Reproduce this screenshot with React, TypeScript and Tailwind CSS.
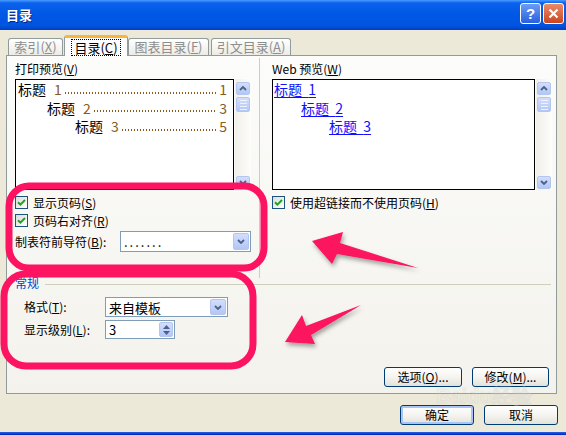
import React from 'react';

const Key = ({ k }: { k: string }) => (
  <>
    (<span className="underline">{k}</span>)
  </>
);

const Check = () => (
  <span className="w-[13px] h-[13px] border border-[#1c5180] bg-gradient-to-br from-[#dcdcd7] to-white flex items-center justify-center shrink-0">
    <svg width="9" height="9" viewBox="0 0 9 9">
      <path d="M1 4.2 L3.4 6.6 L8 2" stroke="#21a121" strokeWidth="2" fill="none" />
    </svg>
  </span>
);

const Chevron = ({ up }: { up?: boolean }) => (
  <svg width="8" height="5" viewBox="0 0 8 5">
    <path d={up ? 'M1 4 L4 1 L7 4' : 'M1 1 L4 4 L7 1'} stroke="#4d6185" strokeWidth="1.8" fill="none" />
  </svg>
);

const BlueBtn = ({ className, children }: { className: string; children?: React.ReactNode }) => (
  <span
    className={`rounded-[2px] border border-[#b4c6ef] bg-gradient-to-b from-[#d2defd] to-[#b3c6f5] flex items-center justify-center ${className}`}
  >
    {children}
  </span>
);

const Select = ({ value, className }: { value: string; className: string }) => (
  <div className={`border border-[#7f9db9] bg-white flex items-center p-[1px] ${className}`}>
    <span className="flex-1 pl-[2px] text-[13px] leading-[15px] whitespace-nowrap">{value}</span>
    <BlueBtn className="w-[16px] h-full">
      <Chevron />
    </BlueBtn>
  </div>
);

const ScrollBar = () => (
  <div className="w-[16px] h-full flex flex-col items-center pt-[3px] pb-[1px] bg-gradient-to-r from-[#f1efe9] to-[#fdfdfa]">
    <BlueBtn className="w-[14px] h-[13px]">
      <Chevron up />
    </BlueBtn>
    <BlueBtn className="w-[14px] h-[15px] mt-[2px] flex-col gap-[2px]">
      <span className="w-[7px] h-px bg-[#eef3fe]" />
      <span className="w-[7px] h-px bg-[#eef3fe]" />
      <span className="w-[7px] h-px bg-[#eef3fe]" />
      <span className="w-[7px] h-px bg-[#eef3fe]" />
    </BlueBtn>
    <div className="flex-1" />
    <BlueBtn className="w-[14px] h-[13px]">
      <Chevron />
    </BlueBtn>
  </div>
);

const XpButton = ({ children, className }: { children: React.ReactNode; className: string }) => (
  <div
    className={`relative z-10 h-[20px] rounded-[3px] border border-[#003c74] bg-gradient-to-b from-white via-[#f5f4f0] to-[#e3e2da] flex items-center justify-center ${className}`}
  >
    {children}
  </div>
);

const printEntries = [
  { indent: 'pl-[2px]', num: '1', page: '1' },
  { indent: 'pl-[31px]', num: '2', page: '3' },
  { indent: 'pl-[59px]', num: '3', page: '5' },
];

const webEntries = [
  { indent: 'pl-[1px]', num: '1' },
  { indent: 'pl-[28px]', num: '2' },
  { indent: 'pl-[56px]', num: '3' },
];

const tabs = [
  { label: '索引', k: 'X', w: 'w-[55px]', active: false, ml: 'ml-0' },
  { label: '目录', k: 'C', w: 'w-[64px]', active: true, ml: 'ml-[1px]' },
  { label: '图表目录', k: 'F', w: 'w-[81px]', active: false, ml: 'ml-0' },
  { label: '引文目录', k: 'A', w: 'w-[80px]', active: false, ml: 'ml-[2px]' },
];

export default function App() {
  return (
    <div className="relative w-[566px] h-[435px] overflow-hidden bg-[#ece9d8] flex flex-col font-['Noto_Sans_CJK_SC','Liberation_Sans',sans-serif] text-[12px] leading-[14px] text-black">
      {/* Title bar */}
      <div className="h-[30px] shrink-0 flex items-center justify-between pl-[6px] pr-[2px] bg-[linear-gradient(180deg,#4a9bff_0%,#0a62ec_10%,#0058e6_45%,#0054e0_85%,#003ec6_100%)]">
        <span className="text-[13px] font-bold text-white [text-shadow:1px_1px_#0b1e8c]">目录</span>
        <div className="flex gap-[2px] pb-[3px]">
          <div className="w-[21px] h-[21px] rounded-[3px] border border-white bg-gradient-to-b from-[#6a9cf6] to-[#2a5fde] flex items-center justify-center text-white font-bold text-[15px] font-['Liberation_Sans',sans-serif]">
            ?
          </div>
          <div className="w-[21px] h-[21px] rounded-[3px] border border-white bg-gradient-to-b from-[#ea8a6a] to-[#c9441c] flex items-center justify-center">
            <svg width="11" height="11" viewBox="0 0 11 11">
              <path d="M1.5 1.5 L9.5 9.5 M9.5 1.5 L1.5 9.5" stroke="white" strokeWidth="2.2" />
            </svg>
          </div>
        </div>
      </div>

      {/* Tabs */}
      <div className="h-[20px] mt-[5px] pl-[8px] flex items-end shrink-0 relative z-10">
        {tabs.map((t) =>
          t.active ? (
            <div
              key={t.label}
              className={`${t.w} ${t.ml} h-[21px] -mb-[1px] bg-[#fcfcfe] border-x border-[#919b9c] rounded-t-[3px] border-t-[3px] border-t-[#f7b53c] flex items-center justify-center`}
            >
              <span className="px-[2px] h-[15px] outline-1 outline-dotted outline-black text-[13px] leading-[15px]">
                {t.label}
                <Key k={t.k} />
              </span>
            </div>
          ) : (
            <div
              key={t.label}
              className={`${t.w} ${t.ml} h-[17px] bg-gradient-to-b from-white to-[#ecebe5] border border-b-0 border-[#919b9c] rounded-t-[3px] flex items-center justify-center text-[#8e8e8e] text-[13px]`}
            >
              {t.label}
              <Key k={t.k} />
            </div>
          )
        )}
      </div>

      {/* Tab panel */}
      <div className="ml-[6px] w-[551px] h-[339px] shrink-0 border border-[#919b9c] bg-gradient-to-b from-[#fcfcfb] to-[#f3f2ec] flex flex-col">
        <div className="mt-[2px] h-[220px] flex">
          {/* Print preview column */}
          <div className="w-[244px] pl-[8px] pt-[4px] flex flex-col">
            <div className="h-[14px]">
              打印预览<Key k="V" />
            </div>
            <div className="mt-[3px] h-[111px] flex gap-[1px]">
              <div className="w-[219px] h-full border border-black bg-white pr-[6px]">
                {printEntries.map((e) => (
                  <div key={e.num} className={`h-[18.5px] flex items-center text-[14px] ${e.indent}`}>
                    <span>标题</span>
                    <span className="ml-[8px] text-[#8a5a1e]">{e.num}</span>
                    <span className="flex-1 self-end mb-[5px] mx-[3px] h-[2px] bg-[linear-gradient(90deg,#8a5a1e_0_1.5px,transparent_1.5px)] bg-[length:3px_2px]" />
                    <span className="text-[#8a5a1e]">{e.page}</span>
                  </div>
                ))}
              </div>
              <ScrollBar />
            </div>
            <div className="mt-[6px] h-[13px] flex items-center gap-[5px]">
              <Check />
              <span>
                显示页码<Key k="S" />
              </span>
            </div>
            <div className="mt-[5px] h-[13px] flex items-center gap-[5px]">
              <Check />
              <span>
                页码右对齐<Key k="R" />
              </span>
            </div>
            <div className="mt-[4px] h-[21px] flex items-center">
              <span className="w-[105px]">
                制表符前导符<Key k="B" />:
              </span>
              <Select value="......." className="w-[131px] h-[21px] tracking-[2px]" />
            </div>
          </div>

          {/* Web preview column */}
          <div className="ml-[8px] border-l border-[#cfcdc2] pl-[12px] pt-[4px] flex flex-col">
            <div className="h-[14px]">
              Web 预览<Key k="W" />
            </div>
            <div className="mt-[3px] h-[111px] flex gap-[1px]">
              <div className="w-[263px] h-full border border-black bg-white">
                {webEntries.map((e) => (
                  <div key={e.num} className={`h-[18.5px] flex items-center text-[14px] ${e.indent}`}>
                    <span className="text-[#1010ff] underline underline-offset-2">
                      标题&nbsp;&nbsp;{e.num}
                    </span>
                  </div>
                ))}
              </div>
              <ScrollBar />
            </div>
            <div className="mt-[6px] h-[13px] flex items-center gap-[5px]">
              <Check />
              <span>
                使用超链接而不使用页码<Key k="H" />
              </span>
            </div>
          </div>
        </div>

        {/* General */}
        <div className="h-[12px] flex items-center pl-[8px] pr-[5px]">
          <span className="text-[#0046d5] -mt-[2px]">常规</span>
          <div className="flex-1 h-px bg-[#d0d0bf] ml-[6px]" />
        </div>
        <div className="mt-[7px] h-[20px] flex items-center pl-[17px]">
          <span className="w-[81px]">
            格式<Key k="T" />:
          </span>
          <Select value="来自模板" className="w-[123px] h-[20px]" />
        </div>
        <div className="mt-[3px] h-[19px] flex items-center pl-[17px]">
          <span className="w-[81px]">
            显示级别<Key k="L" />:
          </span>
          <div className="w-[70px] h-[19px] border border-[#7f9db9] bg-white flex items-center p-[1px]">
            <span className="flex-1 pl-[2px] text-[13px]">3</span>
            <BlueBtn className="w-[14px] h-full flex-col gap-[2px]">
              <svg width="7" height="4" viewBox="0 0 7 4">
                <path d="M0 4 L3.5 0 L7 4 Z" fill="#4d6185" />
              </svg>
              <svg width="7" height="4" viewBox="0 0 7 4">
                <path d="M0 0 L3.5 4 L7 0 Z" fill="#4d6185" />
              </svg>
            </BlueBtn>
          </div>
        </div>

        <div className="mt-[28px] flex justify-end gap-[10px] pr-[7px]">
          <XpButton className="w-[78px]">
            选项<Key k="O" />...
          </XpButton>
          <XpButton className="w-[77px]">
            修改<Key k="M" />...
          </XpButton>
        </div>
      </div>

      {/* Dialog buttons */}
      <div className="mt-[11px] flex justify-end gap-[10px] pr-[8px]">
        <XpButton className="w-[74px] shadow-[inset_0_0_0_2px_#a9c4f5]">确定</XpButton>
        <XpButton className="w-[74px]">取消</XpButton>
      </div>

      <div className="mt-auto h-[3px] bg-gradient-to-b from-[#2a5fe6] to-[#0024b8]" />

      {/* Watermark, faint, between the two button rows */}
      <div className="absolute left-[436px] top-[388px] z-20 pointer-events-none text-transparent [-webkit-text-stroke:1px_rgba(210,210,210,0.35)] font-bold text-[20px] leading-[16px] font-['Liberation_Sans',sans-serif]">
        Baidu经验
      </div>

      {/* Annotations */}
      <svg className="absolute inset-0 z-30 pointer-events-none" width="566" height="435" viewBox="0 0 566 435">
        <defs>
          <filter id="sh" x="-20%" y="-20%" width="140%" height="160%">
            <feDropShadow dx="1.5" dy="3" stdDeviation="2" floodColor="#000" floodOpacity="0.35" />
          </filter>
        </defs>
        <rect x="9" y="186" width="255" height="82" rx="20" fill="none" stroke="#fc1361" strokeWidth="7" />
        <rect x="4" y="274" width="249" height="92" rx="22" fill="none" stroke="#fc1361" strokeWidth="7" />
        <polygon
          points="312,241 343,232 340,243 418,268 337,254 332,264"
          fill="#fc1361"
          filter="url(#sh)"
        />
        <polygon
          points="285,342 302,315 306,326 361,305 311,335 315,344"
          fill="#fc1361"
          filter="url(#sh)"
        />
      </svg>
    </div>
  );
}
